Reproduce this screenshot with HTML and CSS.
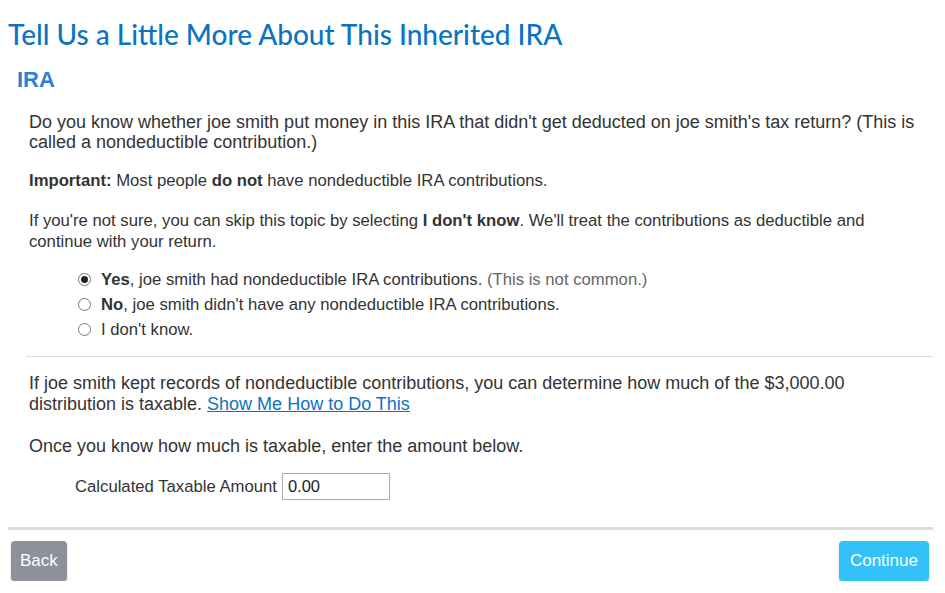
FILE: index.html
```html
<!DOCTYPE html>
<html lang="en">
<head>
  <meta charset="UTF-8" />
  <meta name="viewport" content="width=device-width, initial-scale=1.0" />
  <title>Inherited IRA</title>
  <link rel="stylesheet" href="styles.css">
</head>
<body>

  <h1 class="page-title">Tell Us a Little More About This Inherited IRA</h1>

  <div class="section">
    <h2>IRA</h2>

    <div class="content">
      <p class="lead">Do you know whether joe smith put money in this IRA that didn't get deducted on joe smith's tax return? (This is called a nondeductible contribution.)</p>

      <p class="note"><b>Important:</b> Most people <b>do not</b> have nondeductible IRA contributions.</p>

      <p class="note skip">If you're not sure, you can skip this topic by selecting <b>I don't know</b>. We'll treat the contributions as deductible and continue with your return.</p>

      <div class="choices">
        <label class="choice">
          <input type="radio" name="nondeductible" checked>
          <span><b>Yes</b>, joe smith had nondeductible IRA contributions. <span class="muted">(This is not common.)</span></span>
        </label>
        <label class="choice">
          <input type="radio" name="nondeductible">
          <span><b>No</b>, joe smith didn't have any nondeductible IRA contributions.</span>
        </label>
        <label class="choice">
          <input type="radio" name="nondeductible">
          <span>I don't know.</span>
        </label>
      </div>

      <hr class="rule">

      <p class="lead records">If joe smith kept records of nondeductible contributions, you can determine how much of the $3,000.00 distribution is taxable. <a href="#">Show Me How to Do This</a></p>

      <p class="lead once">Once you know how much is taxable, enter the amount below.</p>

      <div class="field">
        <label for="taxable">Calculated Taxable Amount</label>
        <input type="text" id="taxable" value="0.00">
      </div>
    </div>
  </div>

  <div class="footer">
    <button class="btn back">Back</button>
    <button class="btn continue">Continue</button>
  </div>

</body>
</html>
```

FILE: styles.css
```css
* {
  box-sizing: border-box;
  margin: 0;
  padding: 0;
}

body {
  font-family: "Liberation Sans", Arial, sans-serif;
  color: #333;
  background: #fff;
  padding: 0 12px 0 8px;
}

.page-title {
  font-family: Lato, "Open Sans", sans-serif;
  font-weight: 500;
  font-size: 28px;
  line-height: 32px;
  color: #0a74c4;
  margin-top: 18px;
}

.section {
  padding-left: 9px;
}

.section h2 {
  font-size: 22px;
  line-height: 26px;
  font-weight: bold;
  color: #2d7fdc;
  margin-top: 17px;
}

.content {
  padding: 0 9px 0 12px;
}

.lead {
  font-size: 18px;
  line-height: 20px;
  margin-top: 19px;
}

.note {
  font-size: 16.7px;
  line-height: 20px;
  margin-top: 19px;
}

.note.skip {
  line-height: 21px;
  margin-top: 19px;
}

.choices {
  margin-top: 15px;
  padding-left: 49px;
  font-size: 16.7px;
}

.choice {
  display: flex;
  align-items: center;
  gap: 10px;
  height: 25px;
}

.choice input {
  appearance: none;
  flex: none;
  width: 13px;
  height: 13px;
  border: 1px solid #767676;
  border-radius: 50%;
  background: #fff;
  position: relative;
}

.choice input:checked::after {
  content: "";
  position: absolute;
  left: 2px;
  top: 2px;
  width: 7px;
  height: 7px;
  border-radius: 50%;
  background: #222;
}

.muted {
  color: #666;
}

.rule {
  border: 0;
  border-top: 1px solid #ddd;
  margin: 14px -9px 0 -3px;
}

.records {
  line-height: 21px;
  margin-top: 16px;
}

.records a {
  color: #0a74c4;
}

.once {
  margin-top: 21px;
}

.field {
  display: flex;
  align-items: center;
  gap: 5px;
  margin-top: 17px;
  padding-left: 46px;
  font-size: 16.7px;
}

.field input {
  width: 108px;
  height: 27px;
  border: 1px solid #aaa;
  padding: 0 5px;
  font-family: "Liberation Sans", Arial, sans-serif;
  font-size: 16.5px;
  color: #222;
}

.footer {
  border-top: 3px solid #ddd;
  margin-top: 27px;
  padding: 11px 4px 0 3px;
  display: flex;
  justify-content: space-between;
}

.btn {
  font-family: "Liberation Sans", Arial, sans-serif;
  font-size: 17px;
  color: #fff;
  border: 0;
  border-radius: 4px;
  height: 40px;
  padding: 0 9px;
  box-shadow: 0 2px 2px rgba(0, 0, 0, 0.25);
  cursor: pointer;
}

.btn.back {
  background: #8d9199;
}

.btn.continue {
  background: #33c1fa;
  padding: 0 11px;
}
```
